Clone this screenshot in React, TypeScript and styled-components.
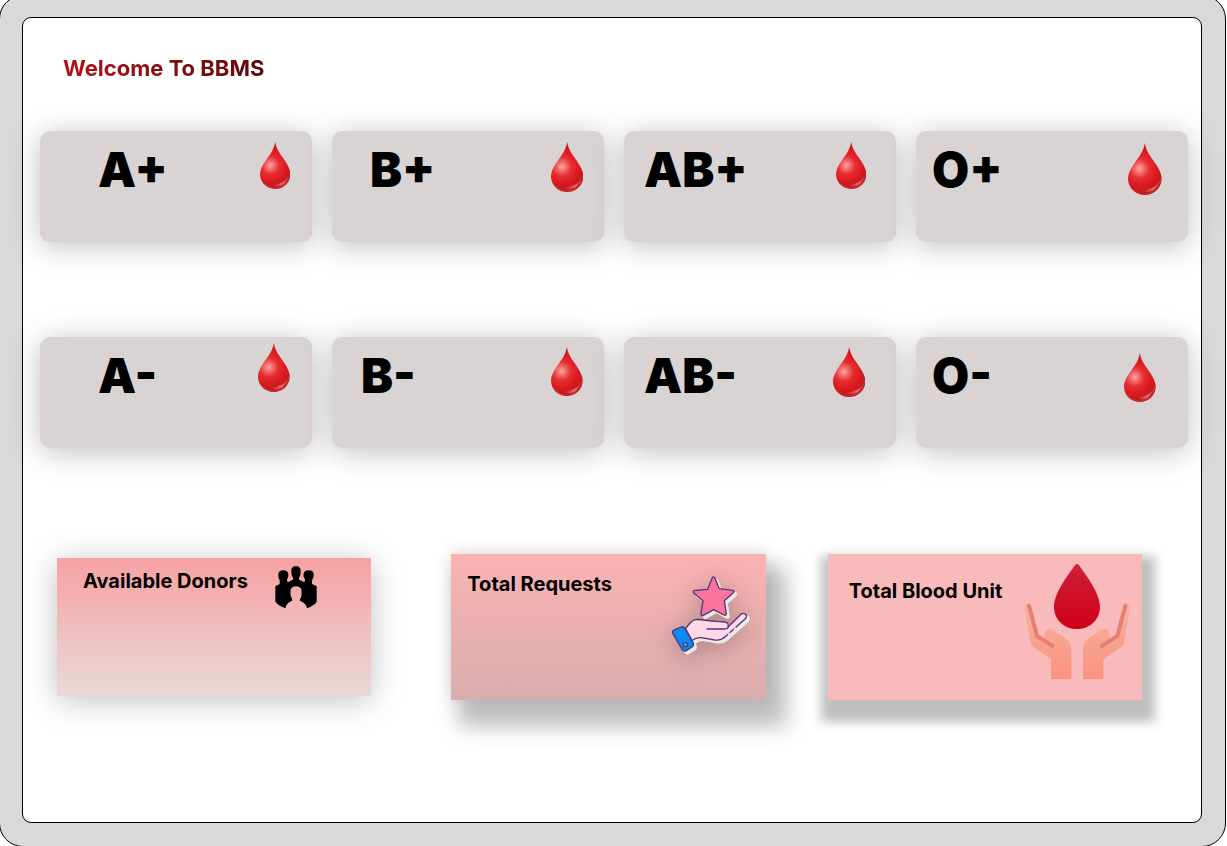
import React, { useId } from "react";
import styled, { createGlobalStyle } from "styled-components";

const GlobalStyle = createGlobalStyle`
  *, *::before, *::after { box-sizing: border-box; }
  body {
    margin: 0;
    background: #ffffff;
    color: #000000;
    font-family: Inter, "Liberation Sans", sans-serif;
  }
`;

const Viewport = styled.div`
  display: flex;
  min-height: 100vh;
  overflow: hidden;
`;

const Frame = styled.div`
  display: flex;
  flex: 1;
  margin: -5px 1px -1px -1px;
  padding: 21px 23px 23px 22px;
  border: 1px solid #000000;
  border-radius: 24px;
  background: #d9d9d9;
`;

const Panel = styled.main`
  flex: 1;
  min-width: 0;
  padding: 36px 13px 40px 17px;
  border: 1px solid #000000;
  border-radius: 9px;
  background: #ffffff;
`;

const Title = styled.h1`
  width: fit-content;
  margin: 0 0 49px 23px;
  font-size: 22px;
  font-weight: 700;
  line-height: 28px;
  color: transparent;
  background: linear-gradient(90deg, #b31217 0%, #5c090c 100%);
  background-clip: text;
  -webkit-background-clip: text;
`;

const GroupGrid = styled.section`
  display: grid;
  grid-template-columns: repeat(4, 1fr);
  gap: 95px 20px;
`;

const GroupCard = styled.article<{ $indent: number; $inset: number }>`
  display: flex;
  align-items: flex-start;
  justify-content: space-between;
  height: 111px;
  padding: 0 ${(p) => p.$inset}px 0 ${(p) => p.$indent}px;
  border-radius: 10px;
  background: #d9d3d3;
  box-shadow: 0 4px 30px rgba(0, 0, 0, 0.25);
`;

const GroupName = styled.h2`
  margin: 10px 0 0;
  font-size: 48px;
  font-weight: 900;
  line-height: 58px;
`;

const DropSvg = styled.svg<{ $size: number; $top: number }>`
  height: ${(p) => p.$size}px;
  margin-top: ${(p) => p.$top}px;
`;

const StatRow = styled.section`
  display: flex;
  align-items: flex-start;
  margin: 106px 46px 0 17px;
`;

const StatCard = styled.article`
  display: flex;
  flex: 1 1 314px;
  align-items: flex-start;
  justify-content: space-between;
  height: 146px;
`;

const DonorsCard = styled(StatCard)`
  height: 138px;
  margin-top: 4px;
  padding: 8px 54px 0 26px;
  background: linear-gradient(#f7a1a2, #e9d9d8);
  box-shadow: 0 4px 30px rgba(0, 0, 0, 0.25);
`;

const RequestsCard = styled(StatCard)`
  margin-left: 80px;
  padding: 18px 15px 0 16px;
  background: linear-gradient(#fbb2b2, #d9adad);
  box-shadow:
    14px 20px 20px 7px rgba(0, 0, 0, 0.25),
    0 -2px 16px rgba(0, 0, 0, 0.12);
`;

const UnitsCard = styled(StatCard)`
  margin-left: 62px;
  padding: 9px 11px 0 21px;
  background: #f9babb;
  box-shadow: 3px 12px 10px 10px rgba(0, 0, 0, 0.25);
`;

const StatName = styled.h2<{ $top?: number }>`
  margin: ${(p) => p.$top ?? 0}px 0 0;
  font-size: 20px;
  font-weight: 700;
  line-height: 24px;
  white-space: nowrap;
`;

const GiftSvg = styled.svg`
  margin-top: 3px;
  overflow: visible;
  filter: drop-shadow(0 4px 12px rgba(0, 0, 0, 0.25));
`;

type Group = {
  name: string;
  indent: number;
  inset: number;
  size: number;
  top: number;
};

const groups: Group[] = [
  { name: "A+", indent: 58, inset: 22, size: 47, top: 11 },
  { name: "B+", indent: 38, inset: 21, size: 50, top: 11 },
  { name: "AB+", indent: 20, inset: 30, size: 47, top: 11 },
  { name: "O+", indent: 16, inset: 26, size: 52, top: 12 },
  { name: "A-", indent: 58, inset: 22, size: 49, top: 6 },
  { name: "B-", indent: 29, inset: 21, size: 49, top: 10 },
  { name: "AB-", indent: 20, inset: 31, size: 50, top: 10 },
  { name: "O-", indent: 16, inset: 32, size: 49, top: 16 },
];

function Drop({ size, top }: { size: number; top: number }) {
  const id = useId();
  return (
    <DropSvg $size={size} $top={top} viewBox="0 0 92 142" aria-hidden="true">
      <defs>
        <radialGradient id={`${id}b`} gradientUnits="userSpaceOnUse" cx="31" cy="70" r="72">
          <stop offset="0" stopColor="#fba9a2" />
          <stop offset="0.16" stopColor="#f4716f" />
          <stop offset="0.38" stopColor="#e62e32" />
          <stop offset="0.65" stopColor="#dd1a1f" />
          <stop offset="1" stopColor="#b3191d" />
        </radialGradient>
        <linearGradient id={`${id}r`} gradientUnits="userSpaceOnUse" x1="36" y1="130" x2="88" y2="100">
          <stop offset="0" stopColor="#ef5457" stopOpacity="0.1" />
          <stop offset="0.5" stopColor="#f0787b" stopOpacity="0.85" />
          <stop offset="1" stopColor="#e5484b" stopOpacity="0.2" />
        </linearGradient>
      </defs>
      <path
        d="M46 0C48 14 54 26 61 36C71 51 92 76 92 97C92 123 71 142 46 142C21 142 0 123 0 97C0 76 21 51 31 36C38 26 44 14 46 0Z"
        fill={`url(#${id}b)`}
      />
      <path
        d="M89 96C89 121 70 139 46 139C32 139 21 134 13 125"
        fill="none"
        stroke="#dc3b3f"
        strokeWidth="2"
      />
      <path d="M86 98C80 120 60 127 36 130C46 137 60 136 71 128C81 120 86 111 86 98Z" fill={`url(#${id}r)`} />
    </DropSvg>
  );
}

function People() {
  return (
    <svg width="42" height="43" viewBox="29 32 126 129" aria-hidden="true">
      <path d="M78 48C77 38 83 33 92 33C101 33 107 38 106 48C106 58 104 63 101 67V73C105 75 110 77 115 80L119 78V72C114 67 114 60 115 54C116 48 122 45 130 45C139 45 145 49 145 57C145 66 143 71 140 74V86L154 93V139C150 147 139 153 125 159C124 148 117 142 104 136C103 133 104 131 106 128C110 120 109 111 108 104C107 97 101 93 92 93C83 93 78 97 76 104C75 113 75 121 79 128C81 131 81 133 80 136C68 142 61 148 61 159C47 154 36 147 30 139V93L43 86V74C39 70 39 64 39 57C39 49 46 45 54 45C63 45 69 49 69 57C69 65 68 69 65 73V78L69 80C74 77 78 75 83 73V67C80 63 78 58 78 48Z" />
    </svg>
  );
}

const starPath =
  "M169 38Q173 34 176 38L190 71L230 76Q236 78 232 83L205 107L211 147Q210 153 204 150L173 134L142 151Q135 153 135 146L141 107L113 84Q109 78 116 76L155 73Z";
const palmPath =
  "M88 190C99 181 103 167 118 164C135 161 154 169 182 169L208 171C215 172 219 179 216 186L255 148C263 142 273 147 271 156C270 160 267 163 263 166L211 212C202 221 192 227 176 225L136 218C121 216 114 222 108 227Z";
const cuffPath =
  "M56 194L76 186Q83 184 87 190L111 233Q115 241 108 246L91 257Q84 261 79 254L51 207Q46 199 56 194Z";

function StarGift() {
  return (
    <GiftSvg width="80" height="81" viewBox="45 30 240 243" aria-hidden="true">
      <g transform="translate(8 8)" fill="#ebe7e9" stroke="#ebe7e9" strokeWidth="5">
        <path d={starPath} />
        <path d={palmPath} />
        <path d={cuffPath} />
      </g>
      <g stroke="#4b3a73" strokeWidth="4" strokeLinejoin="round" strokeLinecap="round">
        <path d={starPath} fill="#fc749d" />
        <path d={palmPath} fill="#ffd7e5" />
        <path d={cuffPath} fill="#0a89f5" />
        <path d="M153 192H206C213 192 217 189 217 184" fill="none" />
        <circle cx="88" cy="239" r="6" fill="#6aaef0" />
      </g>
      <path d="M217 209L222 204M234 194L240 188" stroke="#ffd7e5" strokeWidth="6" />
    </GiftSvg>
  );
}

function CaringHands() {
  const id = useId();
  const hand =
    "M42 154C43 146 54 144 58 151L84 240L108 252C100 240 103 226 117 223C123 222 128 225 132 228L163 247C177 256 184 268 184 283V372H123V313L66 273C63 270 62 267 61 263Z";
  const finger = "M57 152L81 243L128 273";
  return (
    <svg width="108" height="118" viewBox="39 24 324 354" aria-hidden="true">
      <defs>
        <linearGradient id={`${id}s`} gradientUnits="userSpaceOnUse" x1="0" y1="146" x2="0" y2="372">
          <stop offset="0" stopColor="#f3b49f" />
          <stop offset="1" stopColor="#fb927f" />
        </linearGradient>
        <linearGradient id={`${id}d`} x1="0" y1="0" x2="0" y2="1">
          <stop offset="0" stopColor="#cf1f38" />
          <stop offset="1" stopColor="#d00019" />
        </linearGradient>
      </defs>
      <path
        d="M195 31Q201 23 207 31C229 62 270 115 270 155C270 194 239 222 201 222C163 222 132 194 132 155C132 115 173 62 195 31Z"
        fill={`url(#${id}d)`}
      />
      {["", "translate(403 0) scale(-1 1)"].map((transform) => (
        <g key={transform} transform={transform}>
          <path d={hand} fill={`url(#${id}s)`} />
          <path
            d={finger}
            fill="none"
            stroke="#e67f72"
            strokeWidth="12"
            strokeLinecap="round"
            strokeLinejoin="round"
          />
        </g>
      ))}
    </svg>
  );
}

export default function App() {
  return (
    <>
      <GlobalStyle />
      <Viewport>
        <Frame>
          <Panel>
            <Title>Welcome To BBMS</Title>
            <GroupGrid aria-label="Blood groups">
              {groups.map((g) => (
                <GroupCard key={g.name} $indent={g.indent} $inset={g.inset}>
                  <GroupName>{g.name}</GroupName>
                  <Drop size={g.size} top={g.top} />
                </GroupCard>
              ))}
            </GroupGrid>
            <StatRow aria-label="Totals">
              <DonorsCard>
                <StatName $top={3}>Available Donors</StatName>
                <People />
              </DonorsCard>
              <RequestsCard>
                <StatName>Total Requests</StatName>
                <StarGift />
              </RequestsCard>
              <UnitsCard>
                <StatName $top={16}>Total Blood Unit</StatName>
                <CaringHands />
              </UnitsCard>
            </StatRow>
          </Panel>
        </Frame>
      </Viewport>
    </>
  );
}
